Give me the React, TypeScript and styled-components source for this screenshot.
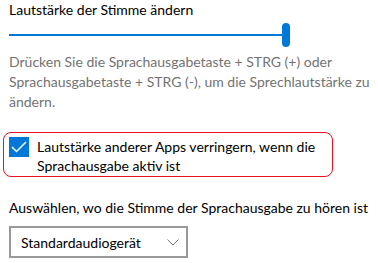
import React from "react";
import styled, { createGlobalStyle } from "styled-components";

const Global = createGlobalStyle`
  html, body { margin: 0; padding: 0; background: #fff; }
  body { font-family: "Lato", "Noto Sans", sans-serif; color: #000; }
`;

const Page = styled.div`
  width: 378px;
  height: 263px;
  padding: 0 0 0 9px;
  box-sizing: border-box;
  display: flex;
  flex-direction: column;
  overflow: hidden;
`;

const Title = styled.div`
  font-size: 14px;
  line-height: 20px;
`;

const SliderRow = styled.div`
  width: 281px;
  height: 24px;
  margin-top: 3px;
  display: flex;
  align-items: center;
`;

const Track = styled.div`
  flex: 1;
  height: 2px;
  background: #0078d7;
`;

const Thumb = styled.div`
  width: 8px;
  height: 24px;
  border-radius: 4px;
  background: #0078d7;
`;

const Hint = styled.p`
  margin: 5px 0 0 0;
  font-size: 14px;
  line-height: 20px;
  color: #737373;
  width: 366px;
`;

const CheckFrame = styled.div`
  margin: 20px 0 0 -6px;
  width: 330px;
  box-sizing: border-box;
  border: 1px solid #e81123;
  border-radius: 8px;
  padding: 4px 5px 1px 5px;
  display: flex;
  align-items: flex-start;
  gap: 8px;
`;

const Box = styled.div`
  width: 20px;
  height: 20px;
  background: #0078d7;
  flex: none;
  display: flex;
  align-items: center;
  justify-content: center;
`;

const CheckLabel = styled.div`
  font-size: 14px;
  line-height: 19px;
`;

const SelectLabel = styled.div`
  margin-top: 21px;
  font-size: 14px;
  line-height: 20px;
`;

const Select = styled.div`
  margin-top: 8px;
  width: 179px;
  height: 32px;
  box-sizing: border-box;
  border: 2px solid #999;
  display: flex;
  align-items: center;
  justify-content: space-between;
  padding: 0 7px 0 10px;
  font-size: 14px;
`;

export default function App() {
  return (
    <>
      <Global />
      <Page>
        <Title>Lautstärke der Stimme ändern</Title>
        <SliderRow>
          <Track />
          <Thumb />
        </SliderRow>
        <Hint>
          Drücken Sie die Sprachausgabetaste + STRG (+) oder Sprachausgabetaste + STRG (-), um die Sprechlautstärke zu ändern.
        </Hint>
        <CheckFrame>
          <Box>
            <svg width="16" height="12" viewBox="0 0 16 12">
              <path d="M1 6 L5.5 10.5 L15 1" fill="none" stroke="#fff" strokeWidth="1.5" />
            </svg>
          </Box>
          <CheckLabel>
            Lautstärke anderer Apps verringern, wenn die Sprachausgabe aktiv ist
          </CheckLabel>
        </CheckFrame>
        <SelectLabel>Auswählen, wo die Stimme der Sprachausgabe zu hören ist</SelectLabel>
        <Select>
          <span>Standardaudiogerät</span>
          <svg width="12" height="7" viewBox="0 0 12 7">
            <path d="M0.5 0.5 L6 6 L11.5 0.5" fill="none" stroke="#767676" strokeWidth="1" />
          </svg>
        </Select>
      </Page>
    </>
  );
}
